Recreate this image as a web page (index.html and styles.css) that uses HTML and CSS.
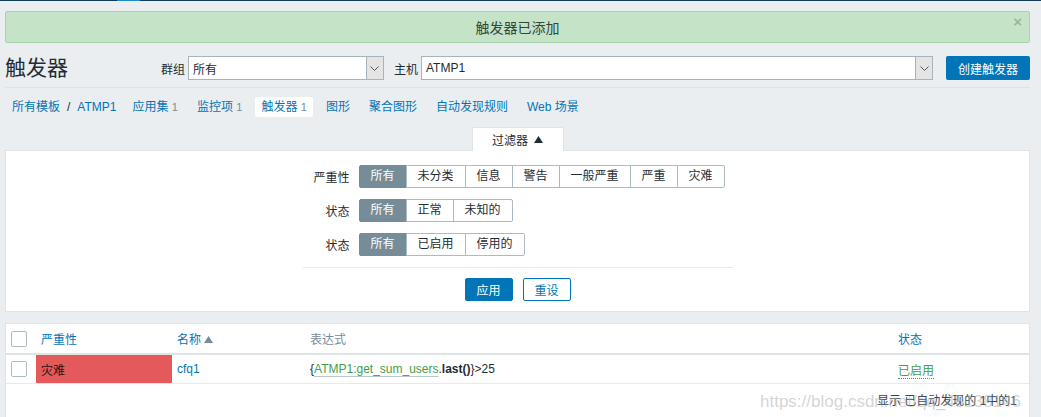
FILE: index.html
```html
<!DOCTYPE html>
<html lang="zh">
<head>
<meta charset="utf-8">
<title>触发器</title>
<link rel="stylesheet" href="styles.css">
</head>
<body>
<div class="topbar"><span class="topbar-active"></span></div>
<main class="page">
  <div class="msg">触发器已添加<span class="msg-close">×</span></div>

  <header class="head">
    <h1 class="title">触发器</h1>
    <span class="lbl">群组</span>
    <div class="select sel-group">
      <span class="sel-text">所有</span>
      <span class="sel-arrow"><svg width="9" height="5" viewBox="0 0 9 5"><polyline points="0.5,0.5 4.5,4.5 8.5,0.5" fill="none" stroke="#555" stroke-width="1"/></svg></span>
    </div>
    <span class="lbl">主机</span>
    <div class="select sel-host">
      <span class="sel-text">ATMP1</span>
      <span class="sel-arrow"><svg width="9" height="5" viewBox="0 0 9 5"><polyline points="0.5,0.5 4.5,4.5 8.5,0.5" fill="none" stroke="#555" stroke-width="1"/></svg></span>
    </div>
    <button class="btn-create">创建触发器</button>
  </header>

  <nav class="nav">
    <span class="nav-item crumb"><a class="link">所有模板</a><span class="sep">/</span><a class="link">ATMP1</a></span>
    <a class="nav-item link">应用集 <span class="count">1</span></a>
    <a class="nav-item link">监控项 <span class="count">1</span></a>
    <span class="nav-item link selected">触发器 <span class="count">1</span></span>
    <a class="nav-item link">图形</a>
    <a class="nav-item link">聚合图形</a>
    <a class="nav-item link">自动发现规则</a>
    <a class="nav-item link">Web 场景</a>
  </nav>

  <div class="filter-tab-row">
    <div class="filter-tab">过滤器 <svg class="tri" width="9" height="7" viewBox="0 0 9 7"><polygon points="4.5,0 9,7 0,7" fill="#1f2c33"/></svg></div>
  </div>

  <section class="filter">
    <div class="filter-form">
      <div class="frow">
        <span class="flabel">严重性</span>
        <div class="seg">
          <span class="on">所有</span><span>未分类</span><span>信息</span><span>警告</span><span>一般严重</span><span>严重</span><span>灾难</span>
        </div>
      </div>
      <div class="frow">
        <span class="flabel">状态</span>
        <div class="seg">
          <span class="on">所有</span><span>正常</span><span>未知的</span>
        </div>
      </div>
      <div class="frow">
        <span class="flabel">状态</span>
        <div class="seg">
          <span class="on">所有</span><span>已启用</span><span>停用的</span>
        </div>
      </div>
      <div class="fsep"></div>
      <div class="factions">
        <button class="btn btn-apply">应用</button>
        <button class="btn btn-reset">重设</button>
      </div>
    </div>
  </section>

  <section class="list">
    <table class="tbl">
      <colgroup>
        <col class="c-cb"><col class="c-sev"><col class="c-name"><col class="c-expr"><col>
      </colgroup>
      <thead>
        <tr>
          <th><span class="cb"></span></th>
          <th><a class="link">严重性</a></th>
          <th><a class="link">名称</a> <svg class="sort" width="9" height="7" viewBox="0 0 9 7"><polygon points="4.5,0 9,7 0,7" fill="#768d99"/></svg></th>
          <th class="muted">表达式</th>
          <th><a class="link">状态</a></th>
        </tr>
      </thead>
      <tbody>
        <tr>
          <td><span class="cb"></span></td>
          <td class="sev-disaster">灾难</td>
          <td><a class="link">cfq1</a></td>
          <td>{<span class="expr-item">ATMP1:get_sum_users</span>.<b>last()</b>}&gt;25</td>
          <td><span class="status-on">已启用</span></td>
        </tr>
      </tbody>
    </table>
    <div class="list-foot">显示 已自动发现的 1中的1</div>
    <div class="watermark">https://blog.csdn.net/qq_40138146</div>
  </section>
</main>
</body>
</html>
```

FILE: styles.css
```css
html, body {
  margin: 0;
  padding: 0;
}
body {
  background: #ebeef0;
  font-family: "Liberation Sans", Arial, "Noto Sans CJK SC", sans-serif;
  font-size: 12px;
  color: #1f2c33;
  overflow: hidden;
  height: 417px;
}

.topbar {
  height: 1px;
  background: #0e3b5a;
  display: flex;
  padding-left: 117px;
}
.topbar-active {
  width: 23px;
  background: #1e88d3;
}

.page {
  padding: 0 11px 0 5px;
}

.msg {
  margin-top: 10px;
  height: 30px;
  border: 1px solid #a9d4ab;
  border-radius: 2px;
  background: #c5e3c7;
  display: flex;
  align-items: center;
  justify-content: center;
  font-size: 14px;
  color: #34463a;
  position: relative;
}
.msg-close {
  position: absolute;
  right: 7px;
  top: 2px;
  color: #9cb3a3;
  font-weight: bold;
  font-size: 15px;
  line-height: 16px;
}

.head {
  display: flex;
  align-items: center;
  margin-top: 13px;
  height: 24px;
  padding-bottom: 7px;
  border-bottom: 1px solid #dde3e6;
}
.title {
  flex: 1;
  margin: 0;
  font-size: 21px;
  font-weight: normal;
  line-height: 24px;
  color: #1f2c33;
}
.lbl {
  margin-right: 3px;
}
.select {
  height: 24px;
  box-sizing: border-box;
  border: 1px solid #a9b4ba;
  background: #fff;
  display: flex;
  align-items: center;
}
.sel-text {
  flex: 1;
  padding-left: 4px;
}
.sel-arrow {
  width: 17px;
  height: 22px;
  box-sizing: border-box;
  background: #e4e4e4;
  border-left: 1px solid #a9b4ba;
  display: flex;
  align-items: center;
  justify-content: center;
}
.sel-group {
  width: 196px;
  margin-right: 10px;
}
.sel-host {
  width: 512px;
  margin-right: 13px;
}
.btn-create {
  width: 84px;
  height: 24px;
  background: #0275b8;
  color: #fff;
  border: 0;
  border-radius: 2px;
  font: inherit;
  padding: 0;
}

.link {
  color: #0275b8;
  text-decoration: none;
}

.nav {
  display: flex;
  align-items: center;
  gap: 7px;
  margin-top: 9px;
  height: 20px;
  padding-left: 1px;
}
.nav-item {
  padding: 0 6px;
  line-height: 20px;
  white-space: nowrap;
}
.nav-item.crumb {
  padding-right: 3px;
}
.nav-item.selected {
  background: #fff;
  border-radius: 2px;
}
.sep {
  margin: 0 7px 0 7px;
  color: #1f2c33;
}
.count {
  color: #768d99;
  font-size: 11px;
}

.filter-tab-row {
  display: flex;
  justify-content: center;
  margin-top: 10px;
}
.filter-tab {
  width: 92px;
  height: 24px;
  box-sizing: border-box;
  background: #fff;
  border: 1px solid #dfe4e7;
  border-bottom: 0;
  border-radius: 2px 2px 0 0;
  display: flex;
  align-items: center;
  justify-content: center;
  gap: 6px;
  margin-bottom: -1px;
  position: relative;
  z-index: 1;
}
.tri {
  display: block;
}

.filter {
  background: #fff;
  border: 1px solid #dfe4e7;
  padding: 14px 0 10px;
}
.filter-form {
  width: 430px;
  margin: 0 auto;
}
.frow {
  display: flex;
  align-items: center;
  height: 23px;
  margin-bottom: 11px;
}
.flabel {
  width: 47px;
  text-align: right;
  margin-right: 9px;
  white-space: nowrap;
}
.seg {
  display: flex;
}
.seg span {
  height: 23px;
  box-sizing: border-box;
  padding: 0 11px;
  border: 1px solid #acbbc2;
  margin-left: -1px;
  line-height: 21px;
  background: #fff;
  white-space: nowrap;
}
.seg span:first-child {
  margin-left: 0;
  border-radius: 2px 0 0 2px;
}
.seg span:last-child {
  border-radius: 0 2px 2px 0;
}
.seg span.on {
  background: #768d99;
  border-color: #768d99;
  color: #fff;
}
.fsep {
  border-top: 1px solid #e6eaec;
}
.factions {
  display: flex;
  justify-content: center;
  gap: 10px;
  margin-top: 10px;
}
.btn {
  width: 48px;
  height: 23px;
  border-radius: 2px;
  font: inherit;
  padding: 0;
  border: 1px solid #0275b8;
}
.btn-apply {
  background: #0275b8;
  color: #fff;
}
.btn-reset {
  background: #fff;
  color: #0275b8;
}

.list {
  margin-top: 11px;
  background: #fff;
  border: 1px solid #dfe4e7;
  border-bottom: 0;
  height: 93px;
  position: relative;
}
.tbl {
  width: 100%;
  border-collapse: collapse;
  table-layout: fixed;
}
.c-cb { width: 30px; }
.c-sev { width: 136px; }
.c-name { width: 133px; }
.c-expr { width: 588px; }
.tbl th {
  height: 29px;
  padding: 0 5px;
  text-align: left;
  font-weight: normal;
  border-bottom: 2px solid #dfe4e7;
  white-space: nowrap;
}
.tbl td {
  height: 28px;
  padding: 0 5px;
  border-bottom: 1px solid #e6eaec;
  white-space: nowrap;
}
.tbl th.muted {
  color: #768d99;
}
.sort {
  vertical-align: 1px;
}
.cb {
  display: block;
  width: 16px;
  height: 16px;
  box-sizing: border-box;
  border: 1px solid #acbbc2;
  border-radius: 2px;
  background: #fff;
}
.tbl td.sev-disaster {
  background: #e45959;
  color: #2a1414;
}
.expr-item {
  color: #429e47;
  text-decoration: underline;
  text-decoration-color: #b8c6cd;
  text-underline-offset: 3px;
}
.tbl b {
  font-weight: bold;
}
.status-on {
  color: #429e47;
  border-bottom: 1px dotted #429e47;
}
.list-foot {
  text-align: right;
  padding: 10px 12px 0;
  line-height: 14px;
  color: #3a464d;
}
.watermark {
  position: absolute;
  left: 754px;
  top: 68px;
  font-size: 17px;
  color: rgba(160, 160, 160, 0.45);
  white-space: nowrap;
  pointer-events: none;
}
```
